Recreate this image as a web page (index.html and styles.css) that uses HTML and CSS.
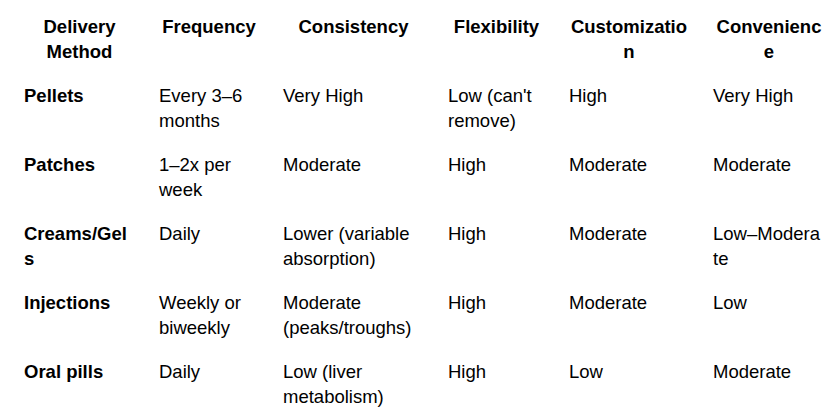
FILE: index.html
```html
<!DOCTYPE html>
<html lang="en">
<head>
<meta charset="utf-8">
<title>Delivery Methods</title>
<link rel="stylesheet" href="styles.css">
</head>
<body>
<div class="wrap">
<table class="cmp">
  <colgroup>
    <col class="c1"><col class="c2"><col class="c3"><col class="c4"><col class="c5"><col class="c6">
  </colgroup>
  <thead>
    <tr>
      <th>Delivery Method</th>
      <th>Frequency</th>
      <th>Consistency</th>
      <th>Flexibility</th>
      <th>Customization</th>
      <th>Convenience</th>
    </tr>
  </thead>
  <tbody>
    <tr>
      <th scope="row">Pellets</th>
      <td>Every 3–6 months</td>
      <td>Very High</td>
      <td>Low (can't remove)</td>
      <td>High</td>
      <td>Very High</td>
    </tr>
    <tr>
      <th scope="row">Patches</th>
      <td>1–2x per week</td>
      <td>Moderate</td>
      <td>High</td>
      <td>Moderate</td>
      <td>Moderate</td>
    </tr>
    <tr>
      <th scope="row">Creams/Gels</th>
      <td>Daily</td>
      <td>Lower (variable absorption)</td>
      <td>High</td>
      <td>Moderate</td>
      <td class="tight">Low–Moderate</td>
    </tr>
    <tr>
      <th scope="row">Injections</th>
      <td>Weekly or biweekly</td>
      <td>Moderate (peaks/troughs)</td>
      <td>High</td>
      <td>Moderate</td>
      <td>Low</td>
    </tr>
    <tr>
      <th scope="row">Oral pills</th>
      <td>Daily</td>
      <td>Low (liver metabolism)</td>
      <td>High</td>
      <td>Low</td>
      <td>Moderate</td>
    </tr>
  </tbody>
</table>
</div>
</body>
</html>
```

FILE: styles.css
```css
html, body {
  margin: 0;
  padding: 0;
  background: #ffffff;
  overflow: hidden;
}

.wrap {
  padding: 4px 0 0 12px;
  width: 817px;
  overflow: hidden;
}

.cmp {
  border-collapse: collapse;
  table-layout: fixed;
  width: 825px;
  font-family: "Liberation Sans", Arial, sans-serif;
  font-size: 18.5px;
  line-height: 25px;
  color: #000000;
}

.c1 { width: 135px; }
.c2 { width: 124px; }
.c3 { width: 165px; }
.c4 { width: 121px; }
.c5 { width: 144px; }
.c6 { width: 136px; }

.cmp th,
.cmp td {
  padding: 9.5px 12px;
  vertical-align: top;
  overflow-wrap: anywhere;
  word-break: break-word;
}

.cmp thead th {
  text-align: center;
  font-weight: bold;
}

.cmp tbody th {
  text-align: left;
  font-weight: bold;
}

.cmp td {
  text-align: left;
  font-weight: normal;
}

.cmp td.tight {
  word-break: break-all;
}
```
